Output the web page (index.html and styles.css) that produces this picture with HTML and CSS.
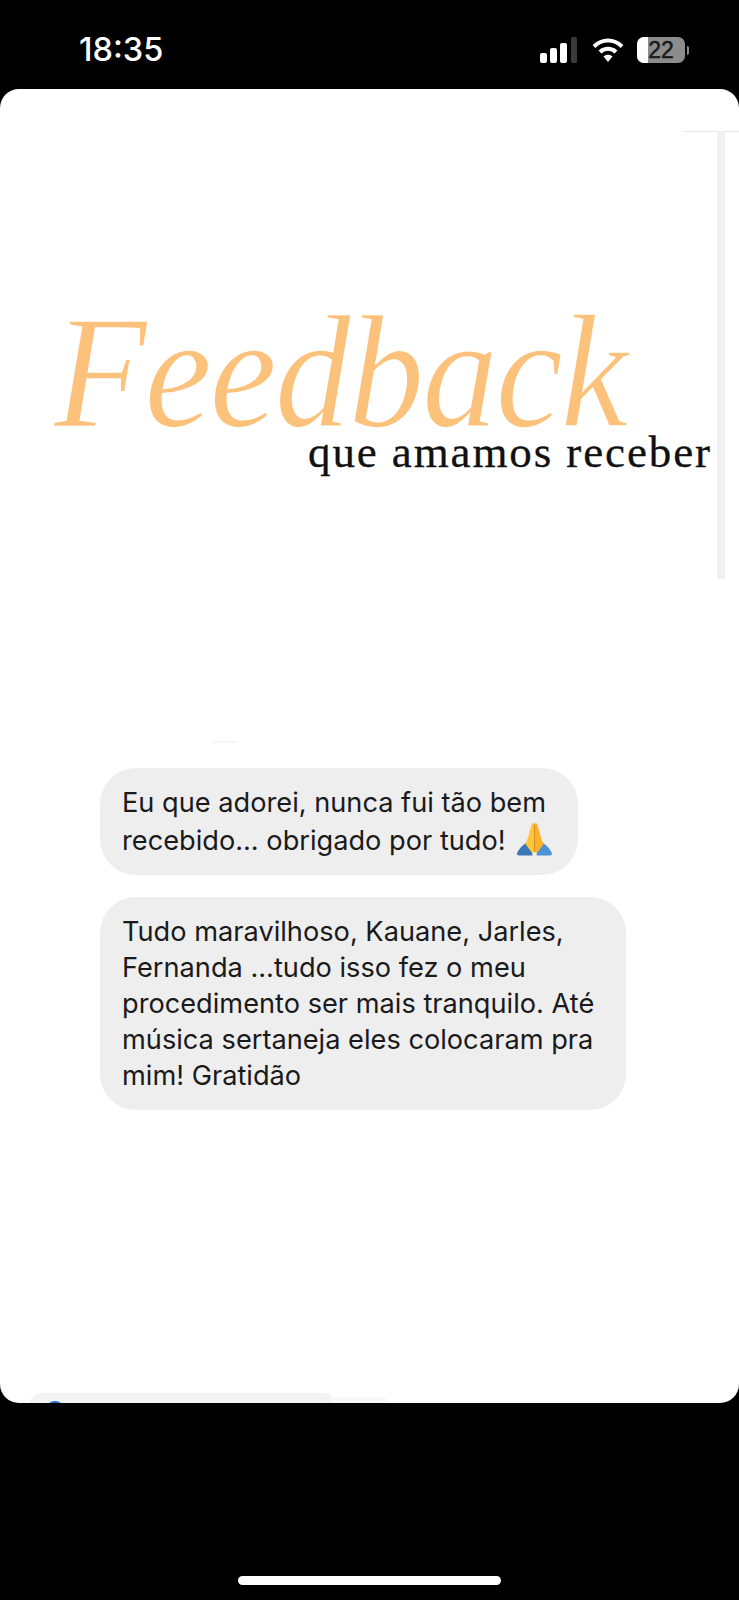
FILE: index.html
```html
<!DOCTYPE html>
<html lang="pt">
<head>
<meta charset="utf-8">
<title>Feedback</title>
<link rel="stylesheet" href="styles.css">
</head>
<body>
<header class="status">
  <span class="time">18:35</span>
  <div class="status-icons">
    <svg class="signal" width="38" height="26" viewBox="0 0 38 26"><rect x="0" y="16" width="7" height="10" rx="2" fill="#fff"/><rect x="10" y="11" width="7" height="15" rx="2" fill="#fff"/><rect x="20" y="6" width="7" height="20" rx="2" fill="#fff"/><rect x="31" y="0" width="6" height="26" rx="1.5" fill="#3a3a3a"/></svg>
    <svg class="wifi" width="32" height="26" viewBox="0 0 32 26"><path d="M2 9.500C10 1.500 22 1.500 30 9.500" fill="none" stroke="#fff" stroke-width="4"/><path d="M8 15C12.500 10.800 19.500 10.800 24 15" fill="none" stroke="#fff" stroke-width="4"/><path d="M11.500 19.500C14 17.300 18 17.300 20.500 19.500L16 25Z" fill="#fff"/></svg>
    <div class="battery"><span class="battery-fill"></span><span class="battery-num">22</span></div>
    <span class="battery-cap"></span>
  </div>
</header>
<main class="card">
  <span class="rule-h"></span>
  <span class="rule-v"></span>
  <section class="title">
    <h1 class="feedback">Feedback</h1>
    <p class="subtitle">que amamos receber</p>
  </section>
  <span class="tick"></span>
  <section class="messages">
    <div class="bubble">Eu que adorei, nunca fui tão bem<br>recebido... obrigado por tudo! <svg class="pray" width="37" height="36" viewBox="0 0 38 36"><path d="M1 33Q3 27 10 22L16 30L17 35H3Q1 35 1 33Z" fill="#3a78b8"/><path d="M37 33Q35 27 28 22L22 30L21 35H35Q37 35 37 33Z" fill="#4c92d4"/><path d="M18.500 1Q16.500 1 15.500 5L12.500 16Q11 21 9.500 23L15.500 31Q18 34 18.500 31Z" fill="#fcc63c"/><path d="M19.500 1Q21.500 1 22.500 5L25.500 16Q27 21 28.500 23L22.500 31Q20 34 19.500 31Z" fill="#f9b32c"/><path d="M19 3V31" stroke="#d9851c" stroke-width="1"/></svg></div>
    <div class="bubble">Tudo maravilhoso, Kauane, Jarles,<br>Fernanda ...tudo isso fez o meu<br>procedimento ser mais tranquilo. Até<br>música sertaneja eles colocaram pra<br>mim! Gratidão</div>
  </section>
  <div class="peek"><span class="peek-dot"></span></div>
  <span class="peek-tail"></span>
</main>
<div class="home"></div>
</body>
</html>
```
FILE: styles.css
```css
* { box-sizing: border-box; }
html, body { margin: 0; padding: 0; }
body { width: 739px; height: 1600px; background: #000; overflow: hidden; font-family: "Inter", "Liberation Sans", sans-serif; display: flex; flex-direction: column; }
.status { height: 89px; flex: none; display: flex; justify-content: space-between; align-items: flex-start; padding: 30px 50px 0 79px; color: #fff; }
.time { font-size: 32.500px; line-height: 40px; font-weight: 500; font-family: "Inter", sans-serif; }
.status-icons { display: flex; align-items: center; padding-top: 7px; }
.signal { margin-right: 14px; }
.wifi { margin-right: 13px; }
.battery { position: relative; width: 48px; height: 26px; border-radius: 7px; background: #8c8c8c; overflow: hidden; display: flex; align-items: center; justify-content: center; }
.battery-fill { position: absolute; left: 0; top: 0; bottom: 0; width: 11px; background: #fff; }
.battery-num { position: relative; color: #1a1a1a; font-size: 23px; font-weight: 400; font-family: "Liberation Sans", sans-serif; -webkit-text-stroke: 0.5px #1a1a1a; }
.battery-cap { width: 2px; height: 9px; background: #8c8c8c; border-radius: 0 2px 2px 0; margin-left: 2px; }
.card { position: relative; flex: none; height: 1314px; background: #fff; border-radius: 19px; overflow: hidden; display: flex; flex-direction: column; }
.rule-h { position: absolute; left: 684px; right: 0; top: 42px; height: 1px; background: #e6e6e6; }
.rule-v { position: absolute; left: 717px; width: 8px; top: 42px; height: 448px; background: #f1f1f1; }
.title { padding: 224px 0 0 54px; height: 650px; flex: none; }
.feedback { margin: 0; font-family: "Liberation Serif", serif; font-style: italic; font-weight: 400; font-size: 160px; line-height: 118px; letter-spacing: -2.500px; color: #fcc17a; -webkit-text-stroke: 1.500px #fff; transform: scaleX(0.95); transform-origin: left center; white-space: nowrap; }
.subtitle { margin: 3px 0 0 254px; font-family: "Liberation Serif", serif; font-size: 45px; line-height: 36px; letter-spacing: 1.900px; color: #111; -webkit-text-stroke: 0.300px #111; white-space: nowrap; }
.tick { position: absolute; left: 213px; top: 652px; width: 24px; height: 2px; background: #f6f6f6; border-radius: 1px; }
.messages { display: flex; flex-direction: column; align-items: flex-start; gap: 22px; padding: 29px 0 0 100px; }
.bubble { background: #eeeeef; border-radius: 36px; padding: 17px 32px 16px 22px; font-size: 27.200px; line-height: 36px; color: #1a1a1a; white-space: nowrap; }
.pray { vertical-align: -7px; margin: 0 -7px 0 3px; }
.peek { position: absolute; left: 28px; bottom: -20px; width: 310px; height: 30px; background: #f3f3f4; border-radius: 15px; }
.peek-dot { position: absolute; left: 17px; top: 8px; width: 20px; height: 20px; border-radius: 50%; background: #1c6fd6; }
.peek-tail { position: absolute; left: 330px; width: 56px; bottom: 0; height: 6px; background: #f9f9f9; }
.home { width: 263px; height: 9px; border-radius: 5px; background: #fff; margin: 173px auto 0; flex: none; }
```
